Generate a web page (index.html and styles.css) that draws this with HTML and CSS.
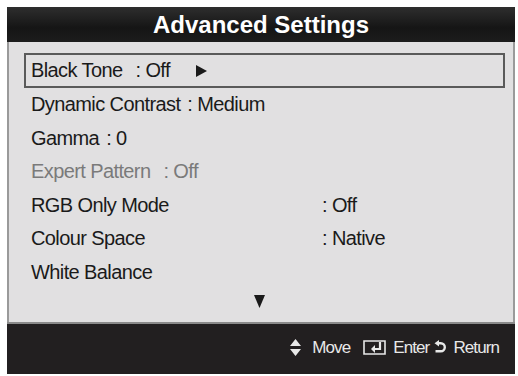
FILE: index.html
```html
<!DOCTYPE html>
<html lang="en">
<head>
  <meta charset="UTF-8" />
  <title>Advanced Settings</title>
  <link rel="stylesheet" href="styles.css">
</head>
<body>

  <div class="panel">
    <div class="title">Advanced Settings</div>

    <div class="menu">
      <div class="row selected">
        <span class="label">Black Tone</span>
        <span class="value">: Off</span>
        <svg class="arrow" width="11" height="12" viewBox="0 0 11 12"><path d="M0 0 L11 6 L0 12 Z" fill="#1a1a1a"/></svg>
      </div>
      <div class="row">
        <span class="label">Dynamic Contrast</span>
        <span class="value tight">: Medium</span>
      </div>
      <div class="row">
        <span class="label">Gamma</span>
        <span class="value tight">: 0</span>
      </div>
      <div class="row disabled">
        <span class="label">Expert Pattern</span>
        <span class="value">: Off</span>
      </div>
      <div class="row">
        <span class="label col">RGB Only Mode</span>
        <span class="value">: Off</span>
      </div>
      <div class="row">
        <span class="label col">Colour Space</span>
        <span class="value">: Native</span>
      </div>
      <div class="row">
        <span class="label">White Balance</span>
      </div>
      <div class="more">
        <svg width="11" height="13" viewBox="0 0 11 13"><path d="M0 0 H11 L5.5 13 Z" fill="#1a1a1a"/></svg>
      </div>
    </div>

    <div class="footer">
      <span class="hint move">
        <svg width="11" height="17" viewBox="0 0 11 17"><path d="M5.5 0 L11 7 H0 Z M0 10 H11 L5.5 17 Z" fill="#e8e8e8"/></svg>
        Move
      </span>
      <span class="hint enter">
        <svg width="23" height="15" viewBox="0 0 23 15"><path d="M1 1 H22 V14 H1 Z" fill="none" stroke="#e8e8e8" stroke-width="1.6"/><path d="M17 2 V9 H11" fill="none" stroke="#e8e8e8" stroke-width="2.2"/><path d="M8 9 L12 5 V13 Z" fill="#e8e8e8"/></svg>
        Enter
      </span>
      <span class="hint">
        <svg width="12" height="15" viewBox="0 0 12 15"><path d="M4 3.2 H6.8 A4 4 0 0 1 6.8 11.2 H1.5" fill="none" stroke="#e8e8e8" stroke-width="2.4"/><path d="M0.5 3.2 L5 0 V6.4 Z" fill="#e8e8e8"/></svg>
        Return
      </span>
    </div>
  </div>

</body>
</html>
```

FILE: styles.css
```css
* {
  box-sizing: border-box;
}

body {
  margin: 0;
  background: #fff;
  font-family: 'Liberation Sans', Arial, sans-serif;
}

.panel {
  margin: 7px 0 0 7px;
  width: 508px;
  height: 367px;
  display: flex;
  flex-direction: column;
}

.title {
  height: 35px;
  background: linear-gradient(#2e2e2e, #151515 60%, #1c1c1c);
  color: #fff;
  font-size: 24px;
  font-weight: bold;
  text-align: center;
  line-height: 35px;
}

.menu {
  flex: 1;
  background: #e1e0e1;
  border-left: 2px solid #9a9a9a;
  border-right: 2px solid #9a9a9a;
  padding: 11px 8px 0 15px;
  color: #1a1a1a;
  font-size: 20px;
  letter-spacing: -0.6px;
}

.row {
  height: 33.5px;
  display: flex;
  align-items: center;
  padding-left: 7px;
}

.row.selected {
  height: 35px;
  border: 2px solid #5a5a5a;
  padding-left: 5px;
}

.label.col {
  width: 278px;
}

.value {
  margin-left: 13px;
}

.value.tight {
  margin-left: 7px;
}

.arrow {
  margin-left: 26px;
}

.disabled {
  color: #7a7a7a;
}

.more {
  display: flex;
  justify-content: center;
  padding-top: 6px;
  padding-right: 10px;
}

.footer {
  height: 52px;
  background: #221f20;
  border-top: 2px solid #8a8a8a;
  display: flex;
  justify-content: flex-end;
  align-items: center;
  gap: 5px;
  padding-right: 16px;
  padding-bottom: 3px;
  color: #e8e8e8;
  font-size: 17px;
  letter-spacing: -0.9px;
}

.hint {
  display: flex;
  align-items: center;
  gap: 7px;
}

.hint.move {
  gap: 11px;
}

.hint.enter {
  margin-left: 8px;
}
```
